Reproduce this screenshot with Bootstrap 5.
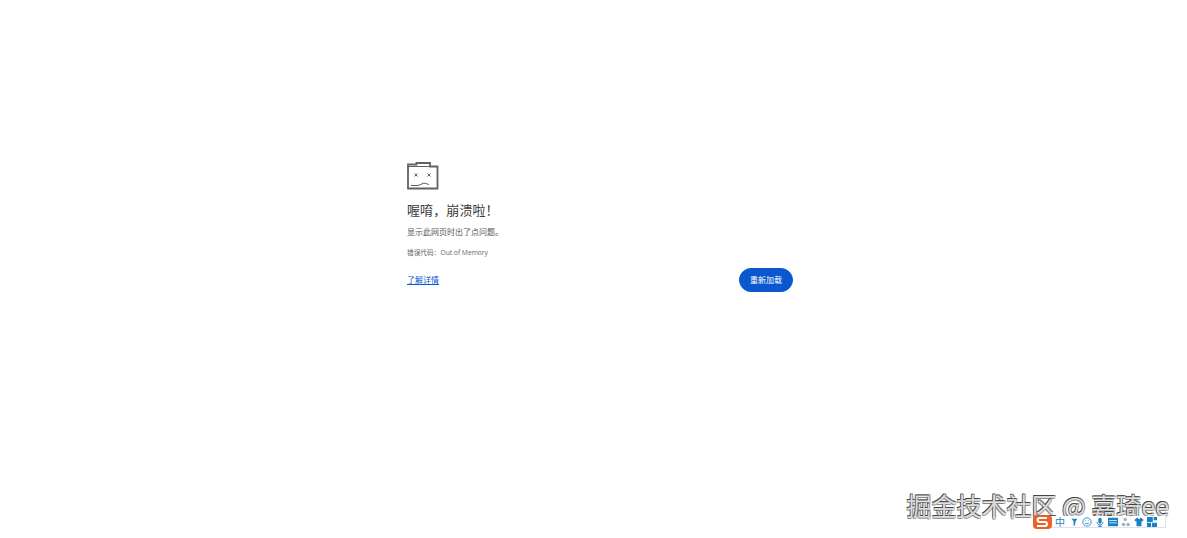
<!DOCTYPE html>
<html lang="zh">
<head>
  <meta charset="UTF-8" />
  <title>喔唷，崩溃啦！</title>
  <link href="https://cdn.jsdelivr.net/npm/bootstrap@5.3.3/dist/css/bootstrap.min.css" rel="stylesheet">
  <style>
    html, body { height: 100%; }
    body { background: #fff; font-family: "Open Sans", "Noto Sans CJK SC", sans-serif; overflow: hidden; }
    .crash-page { height: 538px; padding-top: 162px; }
    .crash-box { width: 386px; margin-left: 407px; }
    .sad-tab { display: block; width: 32px; height: 28px; }
    .crash-title { font-size: 13px; font-weight: 400; line-height: 18px; color: #3a3a3a; margin: 11px 0 0; letter-spacing: .1px; }
    .crash-msg { font-size: 8px; line-height: 12px; color: #555; margin: 7px 0 0; }
    .crash-code { font-size: 6.700px; line-height: 10px; color: #666; margin: 10px 0 0; }
    .crash-actions { margin-top: 10px; }
    .crash-link { font-size: 8px; color: #0b57d0; }
    .reload-btn { width: 54px; height: 24px; padding: 0; font-size: 8px; line-height: 22px; background: #0b57d0; border-color: #0b57d0; border-radius: 12px; }
    .watermark { position: absolute; right: 18px; top: 489px; font-size: 25px; line-height: 32px; color: rgba(255,255,255,.8); font-family: "Noto Sans CJK SC", sans-serif; white-space: nowrap;
      text-shadow: -.8px -.8px .5px #444, .8px -.8px .5px #777, -.8px .8px .5px #888, .8px .8px .5px #bbb; }
    .ime-bar { position: absolute; left: 1034px; top: 516px; width: 132px; height: 12px; background: #fff; border: 1px solid #dde3ea; border-top: 0; border-left: 0; gap: 3px; padding-left: 21px; }
    .ime-bar svg { width: 10px; height: 10px; flex: none; }
    .ime-zh { font-size: 10px; line-height: 10px; width: 11px; color: #1b7fc4; }
    .ime-logo { position: absolute; left: 1033px; top: 515px; width: 19px; height: 14px; }
  </style>
</head>
<body>
  <div class="crash-page">
    <div class="crash-box">
      <!-- sad tab icon -->
      <svg class="sad-tab" viewBox="0 0 32 28" fill="none" stroke="#5f6368">
        <path d="M1 26.500V2.500H9.500V1H23V4.500H30.500V26.500Z" stroke-width="1.800"/>
        <path d="M1 4.500H23" stroke-width="1"/>
        <path d="M7.500 11.500l3 3m0-3l-3 3M20.500 11.500l3 3m0-3l-3 3" stroke-width="1"/>
        <path d="M4 23.500H11L17 21L22 22.500" stroke-width="1"/>
      </svg>
      <h1 class="crash-title">喔唷，崩溃啦！</h1>
      <p class="crash-msg">显示此网页时出了点问题。</p>
      <p class="crash-code">错误代码：Out of Memory</p>
      <div class="crash-actions d-flex justify-content-between align-items-center">
        <a href="#" class="crash-link">了解详情</a>
        <button type="button" class="btn btn-primary reload-btn">重新加载</button>
      </div>
    </div>
  </div>

  <div class="watermark">掘金技术社区 @ 嘉琦ee</div>

  <!-- input method toolbar -->
  <div class="ime-bar d-flex align-items-center">
    <span class="ime-zh">中</span>
    <svg viewBox="0 0 12 12" fill="#1b7fc4"><path d="M3 2h7L8 5 7 10 5.500 11V5z"/></svg>
    <svg viewBox="0 0 12 12" fill="none" stroke="#1b7fc4"><circle cx="6" cy="6" r="5"/><path d="M3.500 7c1 1.500 4 1.500 5 0M4 4.500h1M7 4.500h1"/></svg>
    <svg viewBox="0 0 12 12" fill="#1b7fc4"><rect x="4" y="1" width="4" height="7" rx="2"/><path d="M2.500 6c0 5 7 5 7 0M6 9v2.500M3.500 11.500h5" fill="none" stroke="#1b7fc4"/></svg>
    <svg viewBox="0 0 12 12" fill="#1b7fc4"><path d="M0 1h12v10H0zM1.500 3.500v1h9v-1zM1.500 6.500v1h9v-1z" fill-rule="evenodd"/></svg>
    <svg viewBox="0 0 12 12" fill="#9fb3c4"><circle cx="5" cy="3" r="2"/><circle cx="3" cy="9" r="2.200"/><circle cx="8.500" cy="9" r="2.200"/></svg>
    <svg viewBox="0 0 12 12" fill="#1b7fc4"><path d="M3.500 1L0.500 3.500l1.500 2 1-.5V11h6V5l1 .5 1.500-2-3-2.500H7.500a1.500 1.500 0 0 1-3 0z"/></svg>
    <svg viewBox="0 0 12 12" fill="#1b7fc4"><path d="M0 0h7v6H0zM8 0h4v4H8zM0 7h5v5H0zM6 7h6v5H6z"/></svg>
  </div>
  <svg class="ime-logo" viewBox="0 0 19 14">
    <rect x="0" y="0" width="19" height="14" rx="4" fill="#e8622a"/>
    <path d="M14 3H7Q4.500 3 4.500 5T7 7h5q2 0 2 2t-2 2H4" fill="none" stroke="#fff" stroke-width="2"/>
  </svg>

  <script src="https://cdn.jsdelivr.net/npm/bootstrap@5.3.3/dist/js/bootstrap.bundle.min.js"></script>
</body>
</html>
